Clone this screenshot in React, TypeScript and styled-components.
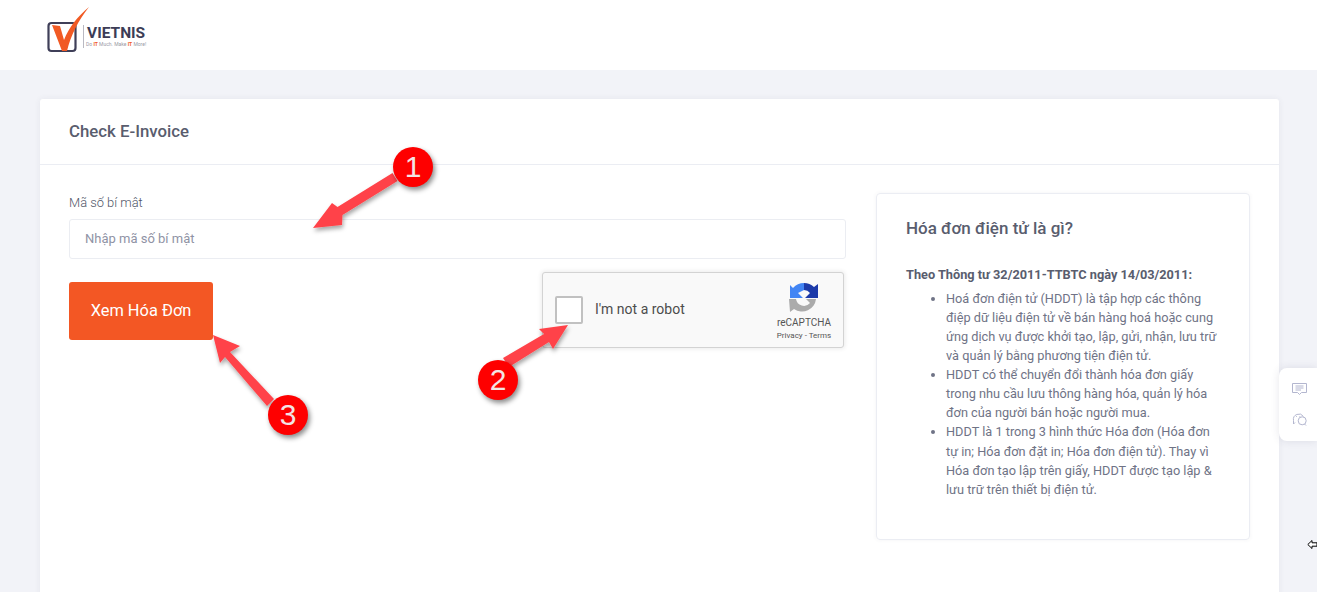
import React from 'react';
import styled, {createGlobalStyle} from 'styled-components';

const GlobalStyle = createGlobalStyle`
  html, body {
    margin: 0;
    height: 592px;
    overflow: hidden;
    background: #f2f3f8;
    font-family: Roboto, "Noto Sans", sans-serif;
  }
  * { box-sizing: border-box; }
`;

const Page = styled.div`
  position: relative;
  width: 1317px;
  height: 592px;
  overflow: hidden;
`;

const TopBar = styled.header`
  height: 70px;
  background: #fff;
  padding: 7px 0 0 46px;
  display: flex;
  align-items: flex-start;
`;

const Logo = styled.div`
  display: flex;
  align-items: flex-start;
`;

const LogoSvg = styled.svg`
  overflow: visible;
`;

const LogoDivider = styled.div`
  width: 1px;
  height: 23px;
  margin: 18px 2px 0 0;
  background: #b9b9c2;
`;

const LogoText = styled.div`
  display: flex;
  flex-direction: column;
  margin-top: 19px;
`;

const LogoName = styled.span`
  font-size: 15.5px;
  line-height: 15px;
  font-weight: 700;
  padding-left: 1px;
  color: #3c3c56;
`;

const LogoSlogan = styled.span`
  font-size: 5px;
  line-height: 7px;
  white-space: nowrap;
  color: #9a9aa6;

  b {
    color: #f15a24;
  }
`;

const Main = styled.main`
  padding: 29px 38px 0 40px;
`;

const Card = styled.section`
  height: 520px;
  background: #fff;
  border-radius: 3px;
  box-shadow: 0 0 6px rgba(60, 60, 90, 0.07);
`;

const CardHeader = styled.div`
  height: 66px;
  padding: 0 29px 2px;
  display: flex;
  align-items: center;
  border-bottom: 1px solid #ebedf3;
`;

const CardTitle = styled.h3`
  margin: 0;
  font-size: 16.8px;
  font-weight: 500;
  color: #595d6e;
`;

const CardBody = styled.div`
  display: flex;
  padding: 28px 29px 0;
  gap: 30px;
`;

const FormColumn = styled.div`
  width: 777px;
`;

const Label = styled.label`
  display: block;
  font-size: 12.9px;
  font-weight: 300;
  line-height: 20px;
  margin: 0 0 6px;
  color: #4f5668;
`;

const SecretInput = styled.input`
  display: block;
  width: 100%;
  height: 40px;
  padding: 0 15px 1px;
  border: 1px solid #ebedf2;
  border-radius: 3px;
  background: #fff;
  font: 400 13px Roboto, sans-serif;
  outline: none;

  &::placeholder {
    color: #8f93a5;
    opacity: 1;
  }
`;

const FormRow = styled.div`
  display: flex;
  justify-content: space-between;
  align-items: flex-start;
  padding: 13px 2px 0 0;
`;

const SubmitButton = styled.button`
  width: 144px;
  height: 58px;
  margin-top: 10px;
  padding: 0 0 2px;
  border: 0;
  border-radius: 3px;
  background: #f35724;
  color: #fff;
  font: 400 16.4px Roboto, sans-serif;
`;

const Captcha = styled.div`
  width: 302px;
  height: 76px;
  display: flex;
  align-items: center;
  padding-left: 12px;
  background: #f9f9f9;
  border: 1px solid #d3d3d3;
  border-radius: 3px;
  box-shadow: 0 0 4px 1px rgba(0, 0, 0, 0.08);
`;

const CaptchaBox = styled.div`
  width: 28px;
  height: 28px;
  background: #fff;
  border: 2px solid #c1c1c1;
  border-radius: 2px;
`;

const CaptchaLabel = styled.span`
  margin: 0 0 2px 12px;
  font-size: 14px;
  color: #4c4c4c;
`;

const CaptchaBrand = styled.div`
  margin-left: auto;
  width: 70px;
  margin-right: 4px;
  align-self: stretch;
  display: flex;
  flex-direction: column;
  align-items: center;
  padding-top: 10px;
`;

const CaptchaName = styled.span`
  font-size: 10px;
  line-height: 12px;
  margin-top: 4px;
  color: #555;
`;

const CaptchaLinks = styled.span`
  font-size: 8px;
  line-height: 13px;
  color: #555;
`;

const InfoBox = styled.aside`
  width: 374px;
  height: 347px;
  padding: 24px 29px 0;
  border: 1px solid #ebedf3;
  border-radius: 4px;
  box-shadow: 0 0 4px rgba(60, 60, 90, 0.06);
`;

const InfoTitle = styled.h4`
  margin: 0 0 26px;
  font-size: 17px;
  line-height: 21px;
  font-weight: 500;
  color: #595d6e;
`;

const InfoLead = styled.p`
  margin: 0;
  font-size: 12.75px;
  line-height: 19px;
  font-weight: 700;
  color: #595d6e;
`;

const InfoList = styled.ul`
  margin: 4.6px 0 0;
  padding: 0 0 0 40px;
`;

const InfoItem = styled.li`
  font-size: 12.75px;
  line-height: 19.125px;
  color: #6f7386;
`;

const SideWidget = styled.div`
  position: absolute;
  top: 368px;
  right: 0;
  width: 38px;
  height: 73px;
  padding: 15px 0 0 13px;
  display: flex;
  flex-direction: column;
  align-items: flex-start;
  gap: 17px;
  background: #fff;
  border-radius: 8px 0 0 8px;
  box-shadow: 0 0 8px rgba(60, 60, 90, 0.12);
`;

const Annotations = styled.svg`
  position: absolute;
  top: 0;
  left: 0;
  pointer-events: none;
`;

const Marker = styled.span<{$x: number; $y: number}>`
  position: absolute;
  left: ${props => props.$x - 20}px;
  top: ${props => props.$y - 20}px;
  width: 40px;
  height: 40px;
  display: flex;
  align-items: center;
  justify-content: center;
  border-radius: 50%;
  background: #fe0000;
  color: #f3e4e4;
  font: 400 30px "Liberation Sans", sans-serif;
  box-shadow: 2px 3px 5px rgba(0, 0, 0, 0.45);
`;

const Cursor = styled.svg`
  position: absolute;
  left: 1307px;
  top: 539px;
`;

const LogoMark = () => (
    <LogoSvg width="37" height="46" viewBox="0 0 37 46">
        <rect x="2.5" y="16" width="27" height="28" rx="3" fill="none" stroke="#3f3f58" strokeWidth="2.2"/>
        <path d="M6 18 L14 19 L18 33 C23 20 32 9 43 0 C32 14 25 28 21 44 L16 44 Z" fill="#f15a24"/>
    </LogoSvg>
);

const RecaptchaMark = () => (
    <svg width="30" height="30" viewBox="0 0 30 30">
        <path d="M15 0 A15 15 0 0 1 25 4 L29 1 V15 H16 L21 10 A8 8 0 0 0 15 7 L13 5 Z" fill="#1c3aa9"/>
        <path d="M15 0 A15 15 0 0 0 4 5 L1 2 V15 H14 L9 10 L13 8 L15 7 Z" fill="#4285f4"/>
        <path d="M0 16 H7 A8 8 0 0 0 21 20 L17 16 H27 A14 14 0 0 1 5 26 L1 29 Z" fill="#ababab"/>
    </svg>
);

const arrows = [
    'M392.5 173 L337.5 207 L332 203 L313 228 L342 225 L342.5 215 L397.5 181 Z',
    'M503 358 L544 334 L539 329 L568 325 L553 349 L549 342 L509 367 Z',
    'M274 399 L230 352 L240 346 L213 335 L220 363 L225 357 L267 406 Z',
];

const App = () => {
    return <Page>
        <GlobalStyle/>
        <TopBar>
            <Logo>
                <LogoMark/>
                <LogoDivider/>
                <LogoText>
                    <LogoName>VIETNIS</LogoName>
                    <LogoSlogan>Do <b>IT</b> Much. Make <b>IT</b> More!</LogoSlogan>
                </LogoText>
            </Logo>
        </TopBar>
        <Main>
            <Card>
                <CardHeader>
                    <CardTitle>Check E-Invoice</CardTitle>
                </CardHeader>
                <CardBody>
                    <FormColumn>
                        <Label>Mã số bí mật</Label>
                        <SecretInput placeholder="Nhập mã số bí mật"/>
                        <FormRow>
                            <SubmitButton>Xem Hóa Đơn</SubmitButton>
                            <Captcha>
                                <CaptchaBox/>
                                <CaptchaLabel>I'm not a robot</CaptchaLabel>
                                <CaptchaBrand>
                                    <RecaptchaMark/>
                                    <CaptchaName>reCAPTCHA</CaptchaName>
                                    <CaptchaLinks>Privacy - Terms</CaptchaLinks>
                                </CaptchaBrand>
                            </Captcha>
                        </FormRow>
                    </FormColumn>
                    <InfoBox>
                        <InfoTitle>Hóa đơn điện tử là gì?</InfoTitle>
                        <InfoLead>Theo Thông tư 32/2011-TTBTC ngày 14/03/2011:</InfoLead>
                        <InfoList>
                            <InfoItem>Hoá đơn điện tử (HDDT) là tập hợp các thông điệp dữ liệu điện tử về bán hàng hoá hoặc cung ứng dịch vụ được khởi tạo, lập, gửi, nhận, lưu trữ và quản lý bằng phương tiện điện tử.</InfoItem>
                            <InfoItem>HDDT có thể chuyển đổi thành hóa đơn giấy trong nhu cầu lưu thông hàng hóa, quản lý hóa đơn của người bán hoặc người mua.</InfoItem>
                            <InfoItem>HDDT là 1 trong 3 hình thức Hóa đơn (Hóa đơn tự in; Hóa đơn đặt in; Hóa đơn điện tử). Thay vì Hóa đơn tạo lập trên giấy, HDDT được tạo lập &amp; lưu trữ trên thiết bị điện tử.</InfoItem>
                        </InfoList>
                    </InfoBox>
                </CardBody>
            </Card>
        </Main>
        <SideWidget>
            <svg width="15" height="12" viewBox="0 0 15 12" fill="none" stroke="#b3b6cf">
                <path d="M.5 .5H14.5V9.5H9.5L7.5 11.5L5.5 9.5H.5Z"/>
                <path d="M3.5 3H11.5M3.5 5H11.5M3.5 7H9"/>
            </svg>
            <svg width="15" height="14" viewBox="0 0 15 14" fill="none" stroke="#b3b6cf">
                <path d="M3 10.5L1.5 12V8.5A5.5 5.5 0 0 1 11.5 4.5"/>
                <path d="M4 4.5H4.8M7.5 4.5H8.3"/>
                <circle cx="10.2" cy="8.8" r="4"/>
                <path d="M12.5 12L14 13.5"/>
            </svg>
        </SideWidget>
        <Annotations width="1317" height="592" viewBox="0 0 1317 592">
            <defs>
                <filter id="arrowShadow" x="-30%" y="-30%" width="160%" height="160%">
                    <feDropShadow dx="1" dy="3" stdDeviation="2" floodColor="#000" floodOpacity="0.35"/>
                </filter>
            </defs>
            {arrows.map(d => <path key={d} d={d} fill="#ff4348" filter="url(#arrowShadow)"/>)}
        </Annotations>
        <Marker $x={413} $y={167}>1</Marker>
        <Marker $x={498} $y={380}>2</Marker>
        <Marker $x={288} $y={415}>3</Marker>
        <Cursor width="11" height="11" viewBox="0 0 11 11">
            <path d="M.8 5.5L5 1.5V3.8H10V7.2H5V9.5Z" fill="#fff" stroke="#000"/>
        </Cursor>
    </Page>;
};

export default App;
